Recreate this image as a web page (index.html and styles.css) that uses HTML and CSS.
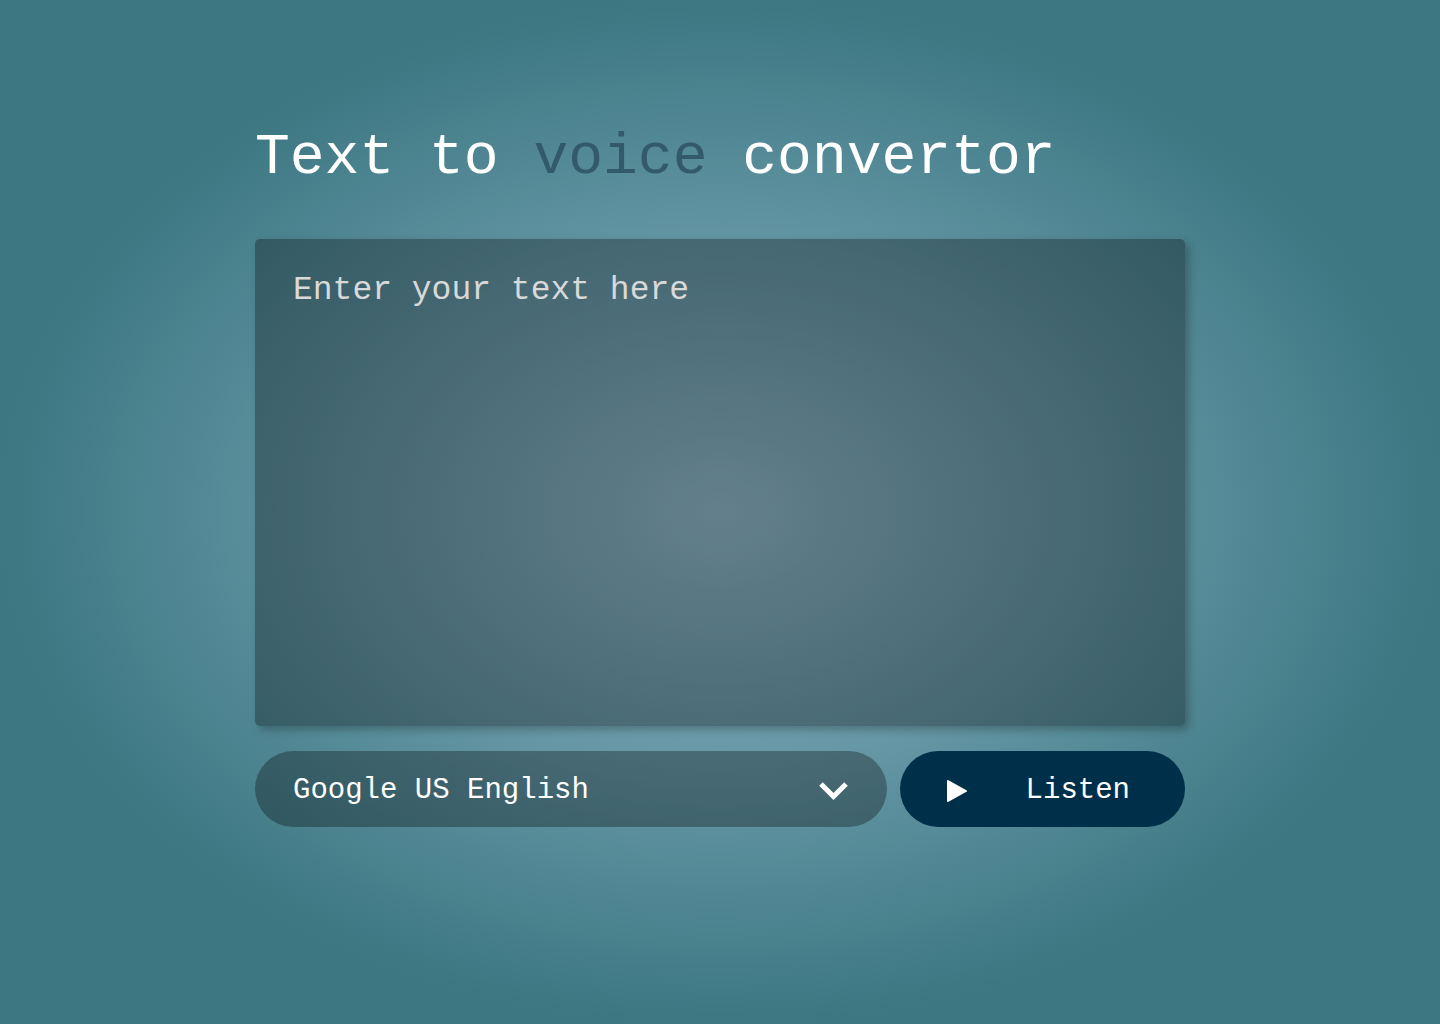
FILE: index.html
```html
<!DOCTYPE html>
<html lang="en">
<head>
  <meta charset="utf-8">
  <meta name="viewport" content="width=device-width, initial-scale=1">
  <title>Text to voice convertor</title>
  <link rel="stylesheet" href="styles.css">
</head>
<body>
  <main class="converter">
    <h1 class="title">Text to <span class="title-accent">voice</span> convertor</h1>
    <textarea class="text-input" aria-label="Text to convert" placeholder="Enter your text here"></textarea>
    <div class="controls">
      <div class="voice">
        <select class="voice-select" aria-label="Voice">
          <option>Google US English</option>
        </select>
        <svg class="voice-arrow" viewBox="0 0 30 18" aria-hidden="true">
          <path d="M2 2l12.500 12.500L27 2" fill="none" stroke="currentColor" stroke-width="5"/>
        </svg>
      </div>
      <button class="listen" type="button">
        <svg class="listen-icon" viewBox="0 0 20 22" aria-hidden="true">
          <path d="M1 1L19 11L1 21Z" fill="currentColor" stroke="currentColor" stroke-width="2" stroke-linejoin="round"/>
        </svg>
        <span>Listen</span>
      </button>
    </div>
  </main>
</body>
</html>
```

FILE: styles.css
```css
* {
  box-sizing: border-box;
}

body {
  margin: 0;
  min-height: 100vh;
  padding: 118px 24px;
  background: radial-gradient(ellipse closest-side, #8fb7c9 0%, #3c7782 100%);
  color: #fff;
  font-family: "Liberation Mono", "Courier New", monospace;
}

.converter {
  max-width: 930px;
  margin: 0 auto;
}

.title {
  margin: 0 0 41px;
  font-size: 58px;
  font-weight: 400;
  line-height: 80px;
}

.title-accent {
  color: #325a6b;
}

.text-input {
  display: block;
  width: 100%;
  height: 487px;
  padding: 30px 38px;
  border: 0;
  border-radius: 5px;
  background: rgba(0, 0, 0, 0.3);
  box-shadow: 4px 4px 8px rgba(0, 0, 0, 0.25);
  color: #fff;
  font: 400 33px/44px "Liberation Mono", "Courier New", monospace;
  resize: none;
}

.text-input::placeholder {
  color: #d9d9d9;
  opacity: 1;
}

.controls {
  display: flex;
  flex-wrap: wrap;
  gap: 13px;
  margin-top: 25px;
}

.voice {
  position: relative;
  flex: 1;
}

.voice-select {
  width: 100%;
  height: 76px;
  padding: 4px 80px 0 38px;
  border: 0;
  border-radius: 38px;
  appearance: none;
  background: rgba(0, 0, 0, 0.3);
  color: #fff;
  font: 400 29px/40px "Liberation Mono", "Courier New", monospace;
}

.voice-arrow {
  position: absolute;
  top: 31px;
  right: 38px;
  width: 30px;
  height: 18px;
  pointer-events: none;
}

.listen {
  display: flex;
  align-items: center;
  justify-content: space-between;
  width: 285px;
  height: 76px;
  padding: 4px 55px 0 47px;
  border: 0;
  border-radius: 38px;
  background: #003049;
  color: #fff;
  font: 400 29px/40px "Liberation Mono", "Courier New", monospace;
}

.listen-icon {
  width: 20px;
  height: 22px;
}
```
